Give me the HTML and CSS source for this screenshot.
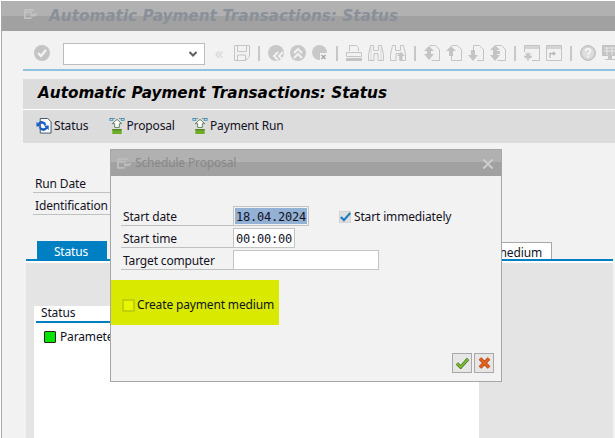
FILE: index.html
```html
<!DOCTYPE html>
<html lang="en">
<head>
<meta charset="utf-8">
<title>Automatic Payment Transactions: Status</title>
<link rel="stylesheet" href="styles.css">
</head>
<body>
<svg class="sprites" width="0" height="0" aria-hidden="true">
  <symbol id="i-title" viewBox="0 0 16 12">
    <path d="M1 1h11M1 1v10h8M1 4h9" fill="none" stroke="currentColor" stroke-width="2"/>
    <path d="M8 6h5l3-1v2l-3 2H8z" fill="currentColor"/>
  </symbol>
  <symbol id="i-ok" viewBox="0 0 16 16">
    <circle cx="8" cy="8" r="8" fill="#c4c4c4"/>
    <path d="M4 8l3 3 5-6" fill="none" stroke="#f2f2f2" stroke-width="2.4"/>
  </symbol>
  <symbol id="i-save" viewBox="0 0 16 16">
    <path d="M.5.5h15v11l-4 4H.5z" fill="none" stroke="#c4c4c4"/>
    <path d="M3.5 1v5.5h9V1M3.5 15v-5h8v5" fill="none" stroke="#c4c4c4"/>
  </symbol>
  <symbol id="i-back" viewBox="0 0 16 16">
    <circle cx="8" cy="8" r="8" fill="#c8c8c8"/>
    <path d="M10 7l-4 4 4 4M15 7l-4 4 4 4" fill="none" stroke="#f2f2f2" stroke-width="2"/>
  </symbol>
  <symbol id="i-up" viewBox="0 0 16 16">
    <circle cx="8" cy="8" r="8" fill="#c8c8c8"/>
    <path d="M4 8l4-4 4 4M4 13l4-4 4 4" fill="none" stroke="#f2f2f2" stroke-width="2"/>
  </symbol>
  <symbol id="i-cancel" viewBox="0 0 16 16">
    <circle cx="7.5" cy="7.5" r="7.5" fill="#c8c8c8"/>
    <rect x="8" y="8" width="8" height="8" fill="#f2f2f2"/>
    <path d="M9.500 10l4 4M13.500 10l-4 4" fill="none" stroke="#a8a8a8" stroke-width="1.500"/>
  </symbol>
  <symbol id="i-print" viewBox="0 0 16 16">
    <path d="M3.500 6V.5h7l2 2V6" fill="none" stroke="#c4c4c4"/>
    <path d="M.5 7.500h15v4H.5z" fill="#f2f2f2" stroke="#c4c4c4"/>
    <rect y="13" width="16" height="3" fill="#c4c4c4"/>
  </symbol>
  <symbol id="i-find" viewBox="0 0 16 16">
    <path d="M2.500.5h3v5h5v-5h3l2 9v6h-5.500v-7h-4v7H.5v-6z" fill="#f2f2f2" stroke="#c4c4c4"/>
    <path d="M3 2v13M13 2v13" stroke="#d8d8d8"/>
  </symbol>
  <symbol id="i-findnext" viewBox="0 0 16 16">
    <path d="M2.500.5h3v5h5v-5h3l2 9v6h-5.500v-7h-4v7H.5v-6z" fill="#f2f2f2" stroke="#c4c4c4"/>
    <path d="M11 7l4 4h-2.500v5h-3v-5H7z" fill="#c4c4c4"/>
  </symbol>
  <symbol id="i-pfirst" viewBox="0 0 16 16">
    <path d="M5.500.5h6l4 4v11h-8" fill="none" stroke="#c4c4c4"/>
    <path d="M5 1l5 5H7v3h3l-5 6-5-6h3V6H0z" fill="#c4c4c4"/>
  </symbol>
  <symbol id="i-pprev" viewBox="0 0 16 16">
    <path d="M5.500.5h6l4 4v11h-10V9" fill="none" stroke="#c4c4c4"/>
    <path d="M5 1l5 5H7v5H3V6H0z" fill="#c4c4c4"/>
  </symbol>
  <symbol id="i-pnext" viewBox="0 0 16 16">
    <path d="M5.500 5V.5h6l4 4v11H9" fill="none" stroke="#c4c4c4"/>
    <path d="M3 5h4v5h3l-5 6-5-6h3z" fill="#c4c4c4"/>
  </symbol>
  <symbol id="i-plast" viewBox="0 0 16 16">
    <path d="M5.500.5h6l4 4v11h-8" fill="none" stroke="#c4c4c4"/>
    <path d="M5 0l5 5H7v1h3v3H7v1h3l-5 6-5-6h3V5H0z" fill="#c4c4c4"/>
  </symbol>
  <symbol id="i-winnew" viewBox="0 0 16 16">
    <path d="M.5.5h15v15H.5z" fill="none" stroke="#c4c4c4"/>
    <rect x="1" y="1" width="14" height="3" fill="#d4d4d4"/>
    <rect y="7" width="8" height="9" fill="#f2f2f2"/>
    <path d="M4 7v9M0 11.500h8M1.500 8.500l5 5M6.500 8.500l-5 5" stroke="#c4c4c4" stroke-width="1.300"/>
  </symbol>
  <symbol id="i-winlink" viewBox="0 0 16 16">
    <path d="M.5.5h15v15H.5z" fill="none" stroke="#c4c4c4"/>
    <rect x="1" y="1" width="14" height="3" fill="#d4d4d4"/>
    <path d="M4 13V8.500h4M7 7l2 1.500-2 1.500" fill="none" stroke="#b8b8b8" stroke-width="1.300"/>
  </symbol>
  <symbol id="i-help" viewBox="0 0 16 16">
    <circle cx="8" cy="8" r="7.500" fill="#d0d0d0" stroke="#c0c0c0"/>
    <circle cx="8" cy="8" r="5.500" fill="#dedede"/>
    <path d="M5.500 6c0-3 5-3 5 0 0 2-2.500 2-2.500 4M8 11v2" fill="none" stroke="#f6f6f6" stroke-width="1.500"/>
  </symbol>
  <symbol id="i-monitor" viewBox="0 0 16 16">
    <rect width="16" height="11" fill="#c4c4c4"/>
    <path d="M2 3h12M2 6h12M5 2v8M10 2v8" stroke="#e8e8e8"/>
    <path d="M6.500 11h3v3h-3zM3 14.500h10" fill="#c4c4c4" stroke="#c4c4c4"/>
  </symbol>
  <symbol id="i-status" viewBox="0 0 17 17">
    <path d="M4.500.5h8l3.500 3.500v12H4.500z" fill="#fff" stroke="#3c4a66"/>
    <path d="M11 7a5 5 0 0 0-9-1.500L.5 4v5h5L3.800 7.300A3 3 0 0 1 9 8z" fill="#1c62c0"/>
    <path d="M3 10a5 5 0 0 0 9 1.500l1.500 1.500V8h-5l1.700 1.700A3 3 0 0 1 5 9z" fill="#1c62c0"/>
  </symbol>
  <symbol id="i-run" viewBox="0 0 16 17">
    <path d="M0 0h4v3H0zM12 0h4v3h-4z" fill="#3a8fb8"/>
    <path d="M1 1h2v1H1zM13 1h2v1h-2z" fill="#dcdcdc"/>
    <path d="M4 .5h2M10 .5h2" stroke="#7a8a94"/>
    <path d="M8 1.500l5 4.500h-2.500v4h-5V6H3z" fill="#fff" stroke="#5f7a58"/>
    <rect x="3" y="12" width="10" height="5" fill="#6fae24"/>
    <path d="M3 12.500h10" stroke="#3d6f12"/>
  </symbol>
  <symbol id="i-check" viewBox="0 0 14 12">
    <path d="M1 6l4 4 8-9" fill="none" stroke="#1c7fc4" stroke-width="2.800"/>
  </symbol>
  <symbol id="i-accept" viewBox="0 0 14 12">
    <path d="M1 6.500l4 4 8-9" fill="none" stroke="#3c6b1c" stroke-width="3.400"/>
    <path d="M1 6.500l4 4 8-9" fill="none" stroke="#7cc030" stroke-width="2"/>
  </symbol>
  <symbol id="i-reject" viewBox="0 0 12 12">
    <path d="M1.500 1.500l9 9M10.500 1.500l-9 9" fill="none" stroke="#a23f12" stroke-width="3.600"/>
    <path d="M1.500 1.500l9 9M10.500 1.500l-9 9" fill="none" stroke="#e8601c" stroke-width="2.400"/>
  </symbol>
  <symbol id="i-close" viewBox="0 0 10 10">
    <path d="M.5.500l9 9M9.500.500l-9 9" fill="none" stroke="#cdcdcd" stroke-width="2"/>
  </symbol>
</svg>

<div class="window">
  <div class="titlebar">
    <svg class="title-icon"><use href="#i-title"/></svg>
    <span class="titlebar-text">Automatic Payment Transactions: Status</span>
  </div>

  <div class="systembar">
    <span class="slot"><svg class="ico"><use href="#i-ok"/></svg></span>
    <span class="combo"><svg class="chevron" viewBox="0 0 8 6"><path d="M.5 1l3.500 3.500L7.500 1" fill="none" stroke="#606060" stroke-width="2"/></svg></span>
    <span class="slot narrow">«</span>
    <span class="slot"><svg class="ico"><use href="#i-save"/></svg></span>
    <span class="sep"></span>
    <span class="slot"><svg class="ico"><use href="#i-back"/></svg></span>
    <span class="slot"><svg class="ico"><use href="#i-up"/></svg></span>
    <span class="slot"><svg class="ico"><use href="#i-cancel"/></svg></span>
    <span class="sep"></span>
    <span class="slot"><svg class="ico"><use href="#i-print"/></svg></span>
    <span class="slot"><svg class="ico"><use href="#i-find"/></svg></span>
    <span class="slot"><svg class="ico"><use href="#i-findnext"/></svg></span>
    <span class="sep"></span>
    <span class="slot"><svg class="ico"><use href="#i-pfirst"/></svg></span>
    <span class="slot"><svg class="ico"><use href="#i-pprev"/></svg></span>
    <span class="slot"><svg class="ico"><use href="#i-pnext"/></svg></span>
    <span class="slot"><svg class="ico"><use href="#i-plast"/></svg></span>
    <span class="sep"></span>
    <span class="slot"><svg class="ico"><use href="#i-winnew"/></svg></span>
    <span class="slot"><svg class="ico"><use href="#i-winlink"/></svg></span>
    <span class="sep"></span>
    <span class="slot"><svg class="ico"><use href="#i-help"/></svg></span>
    <span class="slot"><svg class="ico"><use href="#i-monitor"/></svg></span>
  </div>

  <div class="header">
    <h1 class="screen-title">Automatic Payment Transactions: Status</h1>
    <div class="appbar">
      <span class="appbtn"><svg class="ico"><use href="#i-status"/></svg>Status</span>
      <span class="appbtn"><svg class="ico"><use href="#i-run"/></svg>Proposal</span>
      <span class="appbtn"><svg class="ico"><use href="#i-run"/></svg>Payment Run</span>
    </div>
  </div>

  <div class="fields">
    <div class="field">Run Date</div>
    <div class="field">Identification</div>
  </div>

  <div class="tabs">
    <span class="tab active">Status</span>
    <span class="tab">Printout/data medium</span>
  </div>

  <div class="panel">
    <div class="table">
      <div class="table-head">Status</div>
      <div class="table-row"><span class="led"></span>Parameters have been entered</div>
    </div>
  </div>
</div>

<div class="dialog">
  <div class="dialog-title">
    <svg class="dialog-icon"><use href="#i-title"/></svg>
    <span class="dialog-title-text">Schedule Proposal</span>
    <svg class="dialog-close"><use href="#i-close"/></svg>
  </div>
  <div class="dialog-form">
    <div class="form-row">
      <span class="form-label">Start date</span>
      <span class="input input-date"><span class="selected">18.04.2024</span></span>
      <span class="check"><svg class="check-mark"><use href="#i-check"/></svg></span>
      <span class="check-label">Start immediately</span>
    </div>
    <div class="form-row">
      <span class="form-label">Start time</span>
      <span class="input input-time">00:00:00</span>
    </div>
    <div class="form-row">
      <span class="form-label">Target computer</span>
      <span class="input input-target"></span>
    </div>
  </div>
  <div class="highlight">
    <span class="check-empty"></span>
    <span>Create payment medium</span>
  </div>
  <div class="dialog-actions">
    <span class="action"><svg class="action-icon"><use href="#i-accept"/></svg></span>
    <span class="action"><svg class="action-icon"><use href="#i-reject"/></svg></span>
  </div>
</div>
</body>
</html>
```
FILE: styles.css
```css
* { box-sizing: border-box; }
html, body { margin: 0; padding: 0; }
body {
  position: relative;
  width: 615px;
  height: 438px;
  overflow: hidden;
  background: #fff;
  font: 12px/16px "Noto Sans", "DejaVu Sans", sans-serif;
  letter-spacing: -.15px;
  color: #12121f;
}
.sprites { position: absolute; }
.ico { width: 16px; height: 16px; flex: none; display: block; }

.window {
  margin: 1px 0 0 1px;
  height: 437px;
  width: 614px;
  overflow: hidden;
  background: #f2f2f2;
  border-left: 1px solid #a8a8a8;
}
.titlebar {
  height: 30px;
  display: flex;
  align-items: center;
  padding-left: 21px;
  background: linear-gradient(#b1b1b1 0 15px, #a1a1a1 15px);
  color: #c2c2c2;
}
.title-icon { width: 15px; height: 10px; margin: 0 11px 4px 0; flex: none; }
.titlebar-text {
  font: italic bold 15.25px/32px "DejaVu Sans", sans-serif;
  letter-spacing: 0;
  color: #8a9099;
  white-space: nowrap;
}
.systembar {
  height: 40px;
  margin-left: 21px;
  padding: 8px 0 0 8px;
  display: flex;
  align-items: center;
  width: 700px;
  background: #f2f2f2;
  border-bottom: 2px solid #8ec4de;
}
.slot { width: 22px; height: 22px; padding-bottom: 2px; flex: none; display: flex; align-items: center; justify-content: center; }
.narrow { color: #d6d6d6; font-size: 17px; margin-right: 1px; }
.sep { width: 12px; height: 28px; margin-bottom: 2px; flex: none; background: linear-gradient(#c8c8c8, #c8c8c8) center / 2px 15px no-repeat; }
.combo {
  width: 142px;
  height: 22px;
  margin: 0 3px 0 10px;
  flex: none;
  display: flex;
  align-items: center;
  justify-content: flex-end;
  padding-right: 7px;
  background: #fff;
  border: 1px solid #bcbcbc;
}
.chevron { width: 8px; height: 6px; }

.header { margin: 8px 0 0 21px; background: #dcdcdc; }
.screen-title {
  margin: 0;
  height: 30px;
  padding-left: 15px;
  font: italic bold 15.25px/28px "DejaVu Sans", sans-serif;
  letter-spacing: 0;
  color: #000;
  white-space: nowrap;
}
.appbar {
  height: 34px;
  display: grid;
  grid-template-columns: 53px 64px auto;
  justify-content: start;
  align-items: center;
  padding: 0 0 2px 13px;
  column-gap: 19.500px;
  border-top: 1px solid #fff;
}
.appbtn { display: flex; align-items: center; gap: 2px; white-space: nowrap; }

.fields { padding: 30px 0 0 31px; display: flex; flex-direction: column; gap: 2px; }
.field {
  width: 77px;
  height: 20px;
  padding-left: 2px;
  line-height: 21px;
  border-bottom: 1px solid #c0c0c0;
  white-space: nowrap;
}

.tabs {
  margin: 26px 0 0 35px;
  height: 18px;
  width: 515px;
  display: flex;
  justify-content: space-between;
  align-items: flex-end;
}
.tab {
  height: 17px;
  padding: 0 9px;
  line-height: 19px;
  background: #fff;
  border: 1px solid #a8a8a8;
  border-bottom: 0;
  white-space: nowrap;
}
.tab.active { height: 18px; width: 70px; text-align: center; padding: 1px 2px 0 0; background: #0080c3; border: 0; color: #fff; }

.panel {
  margin-left: 24px;
  width: 587px;
  height: 180px;
  padding: 47px 0 0 8px;
  background: linear-gradient(#0080c3 0 2px, #fff 2px 4px, #e4e4e4 4px);
}
.table { width: 445px; height: 140px; background: #fff; padding-left: 2px; }
.table-head { height: 17px; padding-left: 5px; line-height: 13px; border-bottom: 2px solid #0080c3; }
.table-row { display: flex; align-items: center; gap: 4px; padding: 6px 0 0 8px; white-space: nowrap; }
.led { width: 12px; height: 12px; flex: none; background: #00e400; border: 1px solid #222; border-radius: 1px; }

.dialog {
  position: absolute;
  left: 110px;
  top: 149px;
  width: 392px;
  height: 233px;
  display: flex;
  flex-direction: column;
  background: #f2f2f2;
  border: 1px solid #a6a6a6;
}
.dialog-title {
  height: 26px;
  flex: none;
  display: flex;
  align-items: center;
  padding-left: 6px;
  background: linear-gradient(#b1b1b1 0 12px, #a1a1a1 12px);
  color: #bdbdbd;
}
.dialog-icon { width: 14px; height: 11px; margin-right: 4px; flex: none; }
.dialog-title-text { color: #888; flex: 1; }
.dialog-close { width: 10px; height: 10px; margin: 2px 8px 0 0; flex: none; }

.dialog-form { padding: 30px 0 0 10px; display: flex; flex-direction: column; gap: 2px; }
.form-row { display: flex; height: 20px; align-items: stretch; }
.form-label {
  width: 112px;
  flex: none;
  padding-left: 2px;
  line-height: 21px;
  border-bottom: 1px solid #c0c0c0;
  white-space: nowrap;
}
.input {
  flex: none;
  padding: 1px;
  background: #fff;
  border: 1px solid #c4c4c4;
  font: 12px/18px "DejaVu Sans Mono", monospace;
  letter-spacing: -.2px;
  text-align: center;
}
.input-date { width: 76px; background: #f2f2f2; }
.input-time { width: 62px; }
.input-target { width: 146px; }
.selected { display: block; height: 16px; background: #92b1d4; }
.check {
  width: 12px;
  height: 12px;
  margin: 5px 3px 0 30px;
  flex: none;
  display: flex;
  align-items: center;
  justify-content: center;
  background: #e0e0e0;
  border: 1px solid #d4d4d4;
}
.check-mark { width: 11px; height: 10px; flex: none; }
.check-label { line-height: 22px; white-space: nowrap; }

.highlight {
  width: 168px;
  height: 45px;
  margin-top: 10px;
  padding: 5px 0 0 11px;
  flex: none;
  display: flex;
  align-items: center;
  gap: 2px;
  background: #d9ea00;
  white-space: nowrap;
}
.check-empty { width: 13px; height: 13px; flex: none; background: #e6f700; border: 2px solid #c3d100; }

.dialog-actions { margin-top: auto; padding: 0 7px 8px 0; display: flex; justify-content: flex-end; gap: 2px; }
.action {
  width: 20px;
  height: 20px;
  display: flex;
  align-items: center;
  justify-content: center;
  background: #e6e6e6;
  border: 1px solid #a8a8a8;
}
.action-icon { width: 13px; height: 12px; flex: none; }
```
